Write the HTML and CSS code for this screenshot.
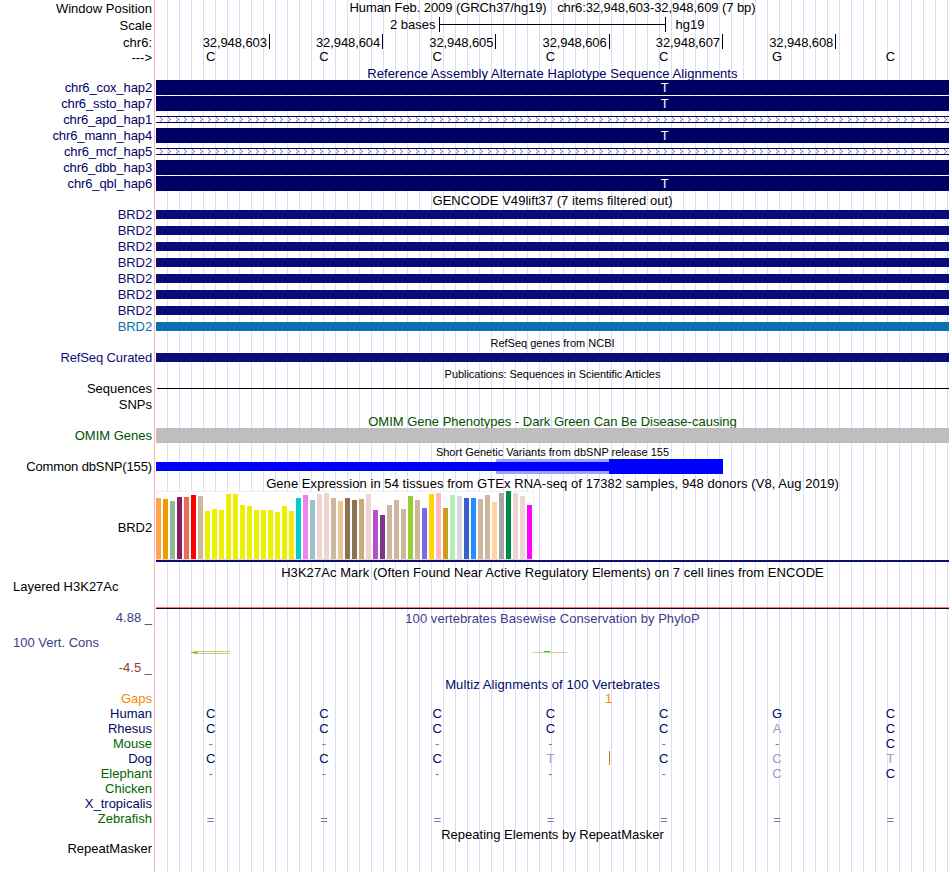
FILE: index.html
```
<!DOCTYPE html>
<html lang="en">
<head>
    <meta charset="UTF-8">
    <meta name="viewport" content="width=device-width, initial-scale=1.0">
    <title>Human chr6:32,948,603-32,948,609 Genome Browser</title>
    <link rel="stylesheet" href="styles.css">
</head>
<body>
    <div class="browser">
        <!-- ruler -->
        <div class="row position">
            <div class="label">Window Position</div>
            <div class="center"><span class="t-position">Human Feb. 2009 (GRCh37/hg19) &nbsp; chr6:32,948,603-32,948,609 (7 bp)</span></div>
        </div>
        <div class="row scale">
            <div class="label">Scale</div>
            <div class="scale-track">
                <span class="scale-size">2 bases</span>
                <span class="scale-bar"></span>
                <span class="scale-db">hg19</span>
            </div>
        </div>
        <div class="row coords">
            <div class="label">chr6:</div>
            <div class="ticks">
                <span>32,948,603</span><span>32,948,604</span><span>32,948,605</span><span>32,948,606</span><span>32,948,607</span><span>32,948,608</span>
            </div>
        </div>
        <div class="row sequence">
            <div class="label">---&gt;</div>
            <div class="bases"><b>C</b><b>C</b><b>C</b><b>C</b><b>C</b><b>G</b><b>C</b></div>
        </div>

        <!-- alternate haplotypes -->
        <div class="title navy"><span class="t-haplotype">Reference Assembly Alternate Haplotype Sequence Alignments</span></div>
        <div class="row navy"><div class="label tight">chr6_cox_hap2</div><div class="block"><i>T</i></div></div>
        <div class="row navy"><div class="label tight">chr6_ssto_hap7</div><div class="block"><i>T</i></div></div>
        <div class="row navy">
            <div class="label tight">chr6_apd_hap1</div>
            <svg class="gap" width="793" height="7">
                <defs>
                    <pattern id="chevron" width="8" height="5" patternUnits="userSpaceOnUse">
                        <path d="M4 0h1v1h-1z M5 1h1v1h-1z M6 2h1v1h-1z M5 3h1v1h-1z M4 4h1v1h-1z" fill="#6c6ca4"/>
                    </pattern>
                </defs>
                <rect width="793" height="5" fill="url(#chevron)"/>
            </svg>
        </div>
        <div class="row navy"><div class="label tight">chr6_mann_hap4</div><div class="block"><i>T</i></div></div>
        <div class="row navy">
            <div class="label tight">chr6_mcf_hap5</div>
            <svg class="gap" width="793" height="7"><rect width="793" height="5" fill="url(#chevron)"/></svg>
        </div>
        <div class="row navy"><div class="label tight">chr6_dbb_hap3</div><div class="block"></div></div>
        <div class="row navy"><div class="label tight">chr6_qbl_hap6</div><div class="block"><i>T</i></div></div>

        <!-- genes -->
        <div class="title"><span class="t-gencode">GENCODE V49lift37 (7 items filtered out)</span></div>
        <div class="row gene"><div class="label tight">BRD2</div><div class="bar"></div></div>
        <div class="row gene"><div class="label tight">BRD2</div><div class="bar"></div></div>
        <div class="row gene"><div class="label tight">BRD2</div><div class="bar"></div></div>
        <div class="row gene"><div class="label tight">BRD2</div><div class="bar"></div></div>
        <div class="row gene"><div class="label tight">BRD2</div><div class="bar"></div></div>
        <div class="row gene"><div class="label tight">BRD2</div><div class="bar"></div></div>
        <div class="row gene"><div class="label tight">BRD2</div><div class="bar"></div></div>
        <div class="row gene-alt"><div class="label tight">BRD2</div><div class="bar"></div></div>

        <div class="title small"><span>RefSeq genes from NCBI</span></div>
        <div class="row gene"><div class="label tight">RefSeq Curated</div><div class="bar"></div></div>

        <div class="title small"><span class="t-pubs">Publications: Sequences in Scientific Articles</span></div>
        <div class="row"><div class="label">Sequences</div><div class="line"></div></div>
        <div class="row"><div class="label">SNPs</div></div>

        <div class="title omim"><span>OMIM Gene Phenotypes - Dark Green Can Be Disease-causing</span></div>
        <div class="row omim"><div class="label">OMIM Genes</div><div class="block grey"></div></div>

        <div class="title small"><span>Short Genetic Variants from dbSNP release 155</span></div>
        <div class="row">
            <div class="label tight">Common dbSNP(155)</div>
            <div class="snps">
                <span class="snp thin"></span>
                <span class="snp faded"></span>
                <span class="snp full"></span>
            </div>
        </div>

        <!-- expression -->
        <div class="title"><span class="t-gtex">Gene Expression in 54 tissues from GTEx RNA-seq of 17382 samples, 948 donors (V8, Aug 2019)</span></div>
        <div class="row gtex">
            <div class="label tight">BRD2</div>
            <div class="gtex-track"><div class="tissues" id="tissues"></div></div>
        </div>

        <div class="title"><span class="t-h3k">H3K27Ac Mark (Often Found Near Active Regulatory Elements) on 7 cell lines from ENCODE</span></div>
        <div class="row h3k">
            <div class="label left">Layered H3K27Ac</div>
            <div class="signal"></div>
        </div>

        <!-- conservation -->
        <div class="row cons">
            <div class="cons-labels">
                <div class="label max">4.88 _</div>
                <div class="label left">100 Vert. Cons</div>
                <div class="label min">-4.5 _</div>
            </div>
            <div class="cons-track">
                <div class="cons-title"><span class="t-phylop">100 vertebrates Basewise Conservation by PhyloP</span></div>
                <svg class="logo" width="793" height="6">
                    <path d="M34 2.5L41 1V4z" fill="#a0a000" opacity=".8"/>
                    <path d="M34 2.5L42 1H74V2H43L41 2.5L43 3H74V4H42z" fill="#a0a000" opacity=".5"/>
                    <path d="M374 2H413L408 3H380z" fill="#a0a000" opacity=".5"/>
                    <path d="M388 1h6v1h-6z" fill="#00e000"/>
                </svg>
            </div>
        </div>

        <!-- multiz -->
        <div class="title align"><span class="t-multiz">Multiz Alignments of 100 Vertebrates</span></div>
        <div class="row species gaps"><div class="label">Gaps</div><div class="bases"><b class="insert">1</b></div></div>
        <div class="row species align"><div class="label">Human</div><div class="bases"><b>C</b><b>C</b><b>C</b><b>C</b><b>C</b><b>G</b><b>C</b></div></div>
        <div class="row species align"><div class="label">Rhesus</div><div class="bases"><b>C</b><b>C</b><b>C</b><b>C</b><b>C</b><b class="diff">A</b><b>C</b></div></div>
        <div class="row species align"><div class="label green">Mouse</div><div class="bases"><b class="miss">-</b><b class="miss">-</b><b class="miss">-</b><b class="miss">-</b><b class="miss">-</b><b class="miss">-</b><b>C</b></div></div>
        <div class="row species align"><div class="label">Dog</div><div class="bases"><b>C</b><b>C</b><b>C</b><b class="diff marked">T</b><b>C</b><b class="diff">C</b><b class="diff">T</b></div></div>
        <div class="row species align"><div class="label green">Elephant</div><div class="bases"><b class="miss">-</b><b class="miss">-</b><b class="miss">-</b><b class="miss">-</b><b class="miss">-</b><b class="diff">C</b><b>C</b></div></div>
        <div class="row species align"><div class="label green">Chicken</div></div>
        <div class="row species align"><div class="label">X_tropicalis</div></div>
        <div class="row species align"><div class="label green">Zebrafish</div><div class="bases unaligned"><b class="miss">=</b><b class="miss">=</b><b class="miss">=</b><b class="miss">=</b><b class="miss">=</b><b class="miss">=</b><b class="miss">=</b></div></div>

        <div class="title"><span>Repeating Elements by RepeatMasker</span></div>
        <div class="row"><div class="label">RepeatMasker</div></div>
    </div>

    <script>
        // [bar height, colour] for each tissue
        const tissues = [
            [61, '#ffa54f'], [60, '#ee9a00'], [58, '#8fbc8f'], [62, '#8b1c62'], [62, '#ee6a50'], [64, '#ff0000'], [63, '#cdb79e'],
            [48, '#eeee00'], [50, '#eeee00'], [49, '#eeee00'], [65, '#eeee00'], [65, '#eeee00'], [54, '#eeee00'], [53, '#eeee00'],
            [49, '#eeee00'], [49, '#eeee00'], [49, '#eeee00'], [47, '#eeee00'], [53, '#eeee00'], [48, '#eeee00'],
            [61, '#00cdcd'], [64, '#ee82ee'], [59, '#9ac0cd'], [65, '#eed5d2'], [66, '#eed5d2'], [61, '#cdb79e'], [58, '#eec591'],
            [61, '#8b7355'], [59, '#8b7355'], [60, '#cdaa7d'], [65, '#eed5d2'], [49, '#b452cd'], [44, '#7a378b'],
            [54, '#cdb79e'], [59, '#cdb79e'], [50, '#cdb79e'], [63, '#9acd32'], [59, '#cdb79e'], [51, '#7a67ee'], [65, '#ffd700'],
            [66, '#ffb6c1'], [51, '#cd9b1d'], [64, '#b4eeb4'], [63, '#d9d9d9'], [61, '#3a5fcd'], [61, '#1e90ff'], [60, '#cdb79e'],
            [64, '#cdb79e'], [57, '#ffd39b'], [66, '#a6a6a6'], [68, '#008b45'], [66, '#eed5d2'], [63, '#eed5d2'], [54, '#ff00ff']
        ];

        const chart = document.getElementById('tissues');
        tissues.forEach(([height, colour]) => {
            const bar = document.createElement('span');
            bar.style.height = height + 'px';
            bar.style.background = colour;
            chart.appendChild(bar);
        });
    </script>
</body>
</html>
```
FILE: styles.css
```
body {
    margin: 0;
    background: #fff;
    color: #000;
    font-family: "Liberation Sans", Arial, Helvetica, sans-serif;
    font-size: 13px;
    line-height: 15px;
}
b, i {
    font-weight: normal;
    font-style: normal;
}
.browser {
    width: 949px;
    height: 872px;
    overflow: hidden;
    background:
        linear-gradient(#ffb4b4, #ffb4b4) 154px 0 / 1px 100% no-repeat,
        repeating-linear-gradient(to right, transparent 0 11px, #dcdcf8 11px 12px) 156px 0 / 793px 100% no-repeat;
}

/* rows */
.row {
    display: grid;
    grid-template-columns: 156px 793px;
    align-items: start;
    height: 16px;
}
.label {
    padding-right: 4px;
    text-align: right;
    white-space: nowrap;
}
.label.left {
    padding-left: 13px;
    text-align: left;
}
.label.tight {
    letter-spacing: -0.12px;
}
.title {
    box-sizing: border-box;
    height: 15px;
    margin-left: 156px;
    padding-top: 1px;
    text-align: center;
    white-space: nowrap;
}
.title.small {
    font-size: 11px;
}
.center {
    text-align: center;
    white-space: nowrap;
}
.t-position { letter-spacing: -0.08px; }
.t-haplotype { letter-spacing: 0.08px; }
.t-gencode { letter-spacing: 0.04px; }
.t-pubs { letter-spacing: -0.04px; }
.t-gtex { letter-spacing: 0.06px; }
.t-h3k { letter-spacing: 0.06px; }
.t-phylop { letter-spacing: 0.05px; }
.t-multiz { letter-spacing: 0.1px; }
.navy { color: #000064; }
.gene { color: #0c0c78; }
.gene-alt { color: #0c6fb0; }
.omim { color: #005000; }
.align { color: #000864; }
.green { color: #006400; }

/* ruler */
.position .label {
    padding-top: 1px;
}
.position {
    height: 17px;
}
.scale .label {
    padding-top: 1px;
}
.scale-track {
    display: flex;
    padding-left: 234px;
}
.scale-bar {
    width: 225px;
    height: 15px;
    margin: 0 10px 0 3px;
    border-left: 1px solid #000;
    border-right: 1px solid #000;
    background: linear-gradient(#000, #000) 0 7px / 100% 1px no-repeat;
}
.scale {
    height: 17px;
}
.coords {
    height: 15px;
}
.coords .label {
    padding-top: 1px;
}
.ticks {
    display: grid;
    grid-template-columns: repeat(7, 1fr);
    margin: 0 -0.5px 0 0.5px;
}
.ticks span {
    padding: 1px 2px 0 0;
    height: 14px;
    border-right: 1px solid #000;
    letter-spacing: -0.1px;
    text-align: right;
}
.sequence {
    height: 16px;
}
.sequence .label {
    padding-top: 1px;
}
.bases {
    display: grid;
    grid-template-columns: repeat(7, 1fr);
    margin-left: -2px;
    margin-right: 2px;
    text-align: center;
}

/* items */
.block {
    display: grid;
    grid-template-columns: repeat(7, 1fr);
    height: 15px;
    background: #000064;
    color: #fff;
    text-align: center;
}
.block i {
    grid-column: 5;
    margin-left: -2px;
}
.block.grey {
    background: #bebebe;
}
.gap {
    display: block;
    box-sizing: border-box;
    margin-top: 4px;
    border-top: 1px solid #000064;
    border-bottom: 1px solid #000064;
}
.bar {
    height: 9px;
    margin-top: 3px;
    background: currentColor;
}
.line {
    height: 1px;
    margin: 7px 0 0 1px;
    background: #000;
}
.snps {
    display: flex;
    align-items: center;
    height: 15px;
}
.snp {
    height: 15px;
    background: #00f;
}
.snp.thin {
    width: 340px;
    height: 9px;
}
.snp.faded {
    width: 113px;
    background: linear-gradient(#a0a0ff 3px, #00f 3px 12px, #a0a0ff 12px);
}
.snp.full {
    width: 114px;
}

/* expression */
.gtex {
    height: 74px;
}
.gtex .label {
    padding-top: 30px;
}
.gtex-track {
    padding-top: 1px;
    border-bottom: 2px solid #0c0c78;
}
.tissues {
    display: flex;
    align-items: flex-end;
    gap: 2px;
    box-sizing: border-box;
    width: 378px;
    height: 69px;
    background: #fff;
    border-bottom: 1px solid #dcdcdc;
    box-shadow: inset 1px 1px #f0f0f0, inset -1px 0 #f0f0f0;
}
.tissues span {
    flex: none;
    width: 5px;
}
.h3k {
    height: 31px;
}
.signal {
    height: 1px;
    margin-top: 28px;
    background: #ff7070;
    border-bottom: 1px solid #140028;
}

/* conservation */
.cons {
    height: 66px;
    color: #3c3c8c;
}
.cons-labels .label {
    height: 25px;
}
.cons-labels .min {
    color: #8c3c3c;
}
.cons-title {
    padding-top: 1px;
    text-align: center;
}
.logo {
    display: block;
    margin-top: 24px;
}

/* alignments */
.species {
    height: 15px;
}
.gaps {
    color: #f08c00;
}
.insert {
    grid-column: 4;
    margin-right: -5px;
    text-align: right;
}
.unaligned {
    padding-top: 1px;
}
.diff { color: #9c9cc4; }
.miss { color: #7878b0; }
.marked {
    background: linear-gradient(#d2781e, #d2781e) 100% 0 / 1px 14px no-repeat;
    margin-right: -3px;
    padding-right: 3px;
}
```
